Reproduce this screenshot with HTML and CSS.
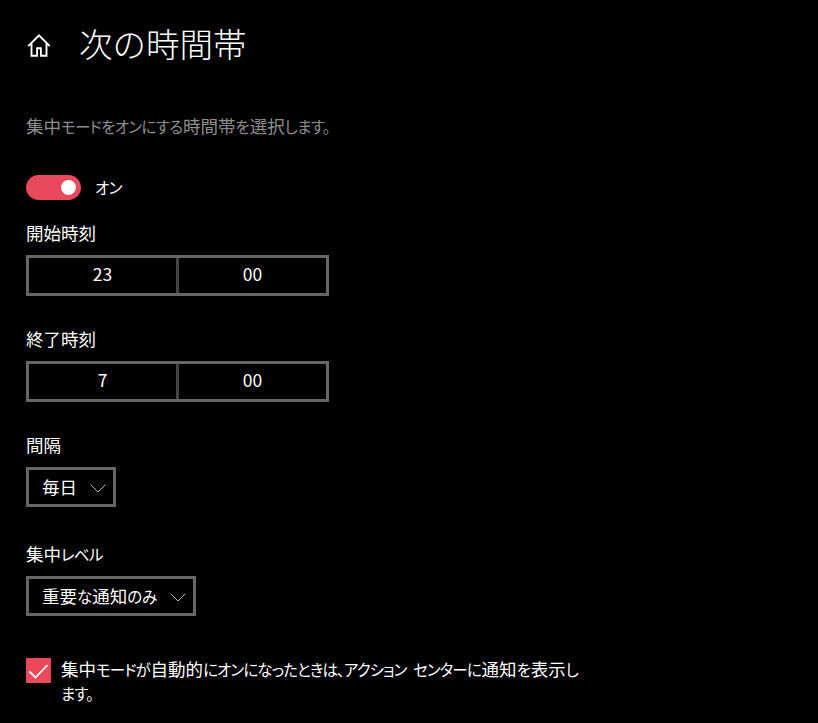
FILE: index.html
```html
<!DOCTYPE html>
<html lang="ja">
  <head>
    <meta charset="utf-8" />
    <title>次の時間帯</title>
    <link rel="stylesheet" href="styles.css">
  </head>
  <body>
    <main class="page">
      <header class="title-row">
        <svg class="home-icon" viewBox="0 0 24 23" width="24" height="23" aria-hidden="true">
          <path d="M1.2 12.2 12 1.4l10.8 10.8M4.5 9v12.8h5.6v-7.6h3.8v7.6h5.6V9" fill="none" stroke="#fff" stroke-width="1.9"/>
        </svg>
        <h1>次の時間帯</h1>
      </header>
      <p class="desc">集中<span class="kana">モードをオンにする</span>時間帯<span class="kana">を</span>選択<span class="kana">します。</span></p>
      <div class="toggle-row">
        <span class="toggle"><span class="knob"></span></span>
        <span class="toggle-label kana">オン</span>
      </div>
      <div class="label first">開始時刻</div>
      <div class="time-picker">
        <span class="cell">23</span>
        <span class="cell">00</span>
      </div>
      <div class="label second">終了時刻</div>
      <div class="time-picker">
        <span class="cell">7</span>
        <span class="cell">00</span>
      </div>
      <div class="label third">間隔</div>
      <div class="select">
        <span>毎日</span>
        <svg class="chevron" viewBox="0 0 16 9" width="16" height="9"><path d="M.7.7 8 8 15.3.7" fill="none" stroke="#bbb" stroke-width="1"/></svg>
      </div>
      <div class="label fourth">集中<span class="kana">レベル</span></div>
      <div class="select">
        <span>重要<span class="kana">な</span>通知<span class="kana">のみ</span></span>
        <svg class="chevron" viewBox="0 0 16 9" width="16" height="9"><path d="M.7.7 8 8 15.3.7" fill="none" stroke="#bbb" stroke-width="1"/></svg>
      </div>
      <div class="check-row">
        <span class="checkbox">
          <svg viewBox="0 0 25 25" width="25" height="25"><path d="M3.5 13.5l6 6L21.5 7" fill="none" stroke="#fff" stroke-width="1.8"/></svg>
        </span>
        <span class="check-text">集中<span class="kana">モードが</span>自動的<span class="kana">にオンになったときは、アクション センターに</span>通知<span class="kana">を</span>表示<span class="kana">し</span><span class="kana">ます。</span></span>
      </div>
    </main>
  </body>
</html>
```

FILE: styles.css
```css
* {
  box-sizing: border-box;
}

html,
body {
  height: 100%;
}

body {
  margin: 0;
  background-color: #000;
  color: #fff;
  font-family: "Noto Sans CJK JP", "Noto Sans", sans-serif;
  font-size: 17.5px;
  font-feature-settings: "palt";
  overflow: hidden;
}

.kana {
  margin-right: 0.7px;
  font-size: 15.5px;
  letter-spacing: -0.7px;
}

.page {
  padding: 20px 0 0 26px;
}

.title-row {
  display: flex;
  align-items: center;
  height: 46px;
}

.home-icon {
  margin: 5px 0 0 1px;
}

h1 {
  margin: 0 0 0 28px;
  font-size: 33.5px;
  font-weight: 300;
  line-height: 46px;
  font-feature-settings: normal;
}

.desc {
  margin: 48px 0 0;
  color: #8f8f8f;
  line-height: 24px;
}

.toggle-row {
  display: flex;
  align-items: center;
  margin-top: 36px;
  height: 26px;
}

.toggle {
  display: flex;
  align-items: center;
  justify-content: flex-end;
  width: 55px;
  height: 25px;
  padding-right: 5px;
  border-radius: 13px;
  background-color: #e94a5b;
}

.knob {
  width: 15px;
  height: 15px;
  border-radius: 50%;
  background-color: #fff;
}

.toggle-label {
  margin-left: 14px;
  line-height: 24px;
}

.label {
  line-height: 22px;
}

.first {
  margin-top: 22px;
}

.second {
  margin-top: 32px;
}

.third {
  margin-top: 32px;
}

.fourth {
  margin-top: 36px;
}

.time-picker {
  display: flex;
  width: 303px;
  height: 41px;
  margin-top: 11px;
  border: 3px solid #666;
}

.cell {
  flex: 1;
  text-align: center;
  line-height: 32px;
}

.cell + .cell {
  border-left: 3px solid #444;
}

.select {
  display: inline-flex;
  align-items: center;
  height: 40px;
  margin-top: 11px;
  padding: 0 7px 0 13px;
  border: 3px solid #666;
  line-height: 32px;
}

.select .kana {
  margin-right: 0;
  letter-spacing: 0;
}

.chevron {
  margin: 2px 0 0 13px;
}

.check-row {
  display: flex;
  margin-top: 31px;
}

.checkbox {
  flex: none;
  width: 25px;
  height: 25px;
  margin-top: 11px;
  background-color: #e94a5b;
}

.checkbox svg {
  display: block;
}

.check-text {
  width: 522px;
  margin-left: 10px;
  line-height: 24px;
  padding-top: 10px;
}

.check-text .kana {
  letter-spacing: -0.9px;
  word-spacing: 4px;
}
```
